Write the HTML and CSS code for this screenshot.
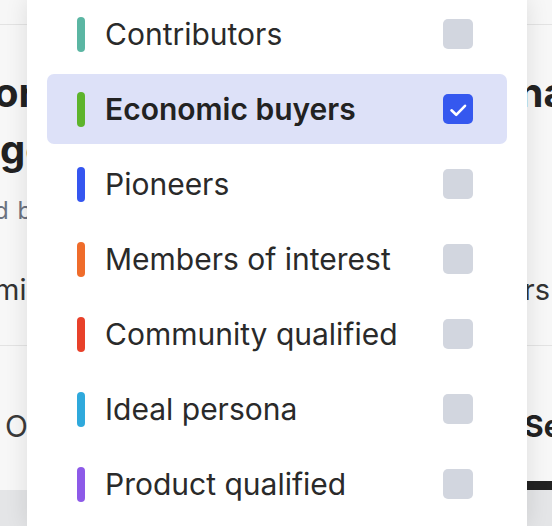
FILE: index.html
```html
<!DOCTYPE html>
<html lang="en">
<head>
<meta charset="utf-8">
<title>Persona filter</title>
<link rel="stylesheet" href="styles.css">
</head>
<body>
<div class="page">
  <div class="topbar"></div>
  <div class="bgrow title"><span class="lt cut">or</span><span class="rt over">nag</span></div>
  <div class="bgrow title"><span class="lt">ge</span></div>
  <div class="bgrow sub"><span class="lt cut">d by</span></div>
  <div class="bgrow meta"><span class="lt cut">mic</span><span class="rt">ers</span></div>
  <div class="divider"></div>
  <div class="tabs">
    <span class="tab">Ov</span>
    <span class="tab active">Seg</span>
  </div>
  <div class="bottom"></div>
</div>

<div class="menu">
  <div class="item"><span class="bar c-teal"></span><span class="label">Contributors</span><span class="box"></span></div>
  <div class="item selected"><span class="bar c-green"></span><span class="label">Economic buyers</span><span class="box checked"><svg viewBox="0 0 30 30" width="30" height="30"><path d="M8.5 16.3 L13.2 20.8 L22 11.8" fill="none" stroke="#fff" stroke-width="2.6" stroke-linecap="round" stroke-linejoin="round"/></svg></span></div>
  <div class="item"><span class="bar c-blue"></span><span class="label">Pioneers</span><span class="box"></span></div>
  <div class="item"><span class="bar c-orange"></span><span class="label">Members of interest</span><span class="box"></span></div>
  <div class="item"><span class="bar c-red"></span><span class="label">Community qualified</span><span class="box"></span></div>
  <div class="item"><span class="bar c-cyan"></span><span class="label">Ideal persona</span><span class="box"></span></div>
  <div class="item"><span class="bar c-purple"></span><span class="label">Product qualified</span><span class="box"></span></div>
</div>
</body>
</html>
```

FILE: styles.css
```css
html, body {
  margin: 0;
  padding: 0;
}
body {
  width: 552px;
  height: 526px;
  overflow: hidden;
  position: relative;
  background: #f7f7f7;
  font-family: Inter, "Noto Sans", sans-serif;
  color: #262626;
}
.page {
  display: flex;
  flex-direction: column;
  height: 526px;
}
.topbar {
  height: 24px;
  border-bottom: 1px solid #e3e3e3;
  flex: none;
}
.bgrow {
  display: flex;
  justify-content: space-between;
  white-space: nowrap;
  flex: none;
}
.lt.cut { margin-left: -6px; }
.rt.over { margin-right: -40px; }
.title {
  height: 57px;
  line-height: 57px;
  font-size: 40px;
  font-weight: 700;
  color: #222;
}
.topbar + .title { margin-top: 39px; }
.sub {
  margin-top: 18px;
  height: 30px;
  line-height: 30px;
  font-size: 24px;
  letter-spacing: 1px;
  color: #6b7280;
}
.meta {
  margin-top: 44px;
  height: 40px;
  line-height: 40px;
  font-size: 29px;
  color: #333;
}
.meta .rt { margin-right: 2px; }
.divider {
  margin-top: 35px;
  border-top: 1px solid #e3e3e3;
  flex: none;
}
.tabs {
  margin-top: 60px;
  display: flex;
  justify-content: space-between;
  white-space: nowrap;
  flex: none;
  font-size: 30px;
  line-height: 40px;
}
.tab {
  height: 75px;
  color: #3a3a3a;
  padding-left: 5px;
}
.tab.active {
  font-weight: 700;
  color: #222;
  padding-left: 0;
  margin-right: -30px;
  width: 58px;
  border-bottom: 9px solid #222;
}
.bottom {
  flex: 1;
  background: #e4e5e7;
}

.menu {
  position: absolute;
  left: 27px;
  top: -1px;
  width: 500px;
  bottom: 0;
  background: #fff;
  box-shadow: 0 0 22px rgba(0, 0, 0, 0.11);
  display: flex;
  flex-direction: column;
  gap: 5px;
  padding: 0 20px;
  box-sizing: border-box;
}
.item {
  height: 70px;
  flex: none;
  display: flex;
  align-items: center;
  padding: 0 34px 0 30px;
  border-radius: 7px;
}
.item.selected {
  background: #dde1f8;
}
.bar {
  width: 8px;
  height: 35px;
  border-radius: 4px;
  margin-right: 20px;
  flex: none;
}
.c-teal { background: #5bb6a3; }
.c-green { background: #5db42c; }
.c-blue { background: #3556f0; }
.c-orange { background: #ef6c2b; }
.c-red { background: #e8412a; }
.c-cyan { background: #2fa9dc; }
.c-purple { background: #8d5ae8; }
.label {
  flex: 1;
  font-size: 30px;
  line-height: 36px;
  color: #2a2a2a;
  white-space: nowrap;
}
.selected .label {
  font-weight: 600;
  color: #222;
}
.box {
  width: 30px;
  height: 30px;
  border-radius: 5px;
  background: #d2d6df;
  flex: none;
  display: flex;
}
.box.checked {
  background: #3558ef;
}
```
